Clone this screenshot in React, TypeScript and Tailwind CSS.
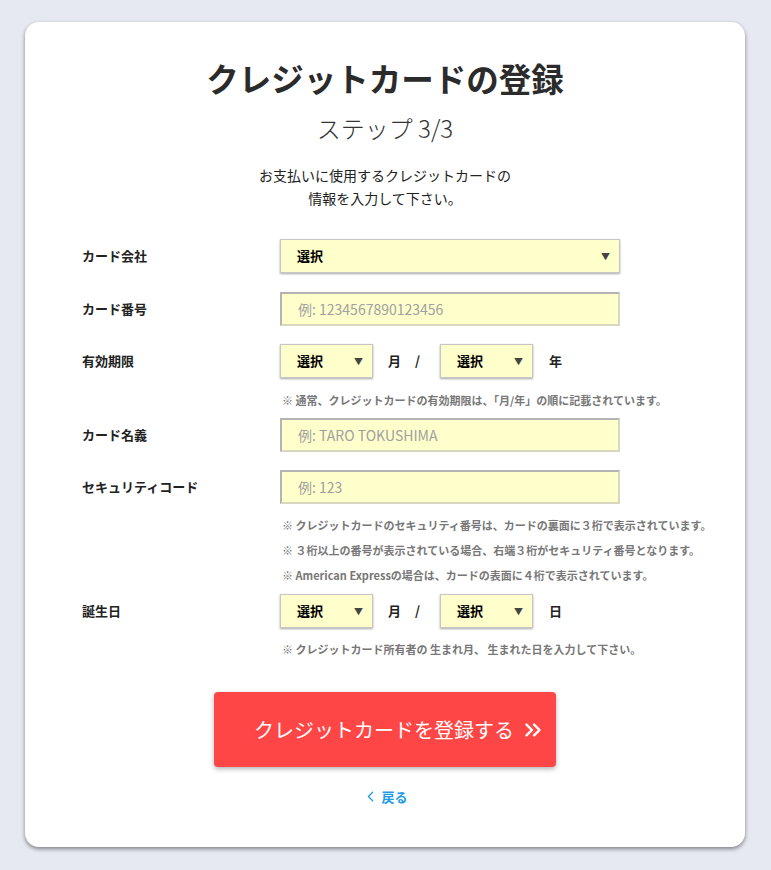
import { ChevronLeft, ChevronsRight } from "lucide-react";
import type { ReactNode } from "react";

const FONT = '"Noto Sans CJK JP", "Noto Sans", sans-serif';

function Label({ children }: { children: ReactNode }) {
  return (
    <div className="w-[198px] shrink-0 text-[13px] font-bold text-[#222]">
      {children}
    </div>
  );
}

function SelectBox({ width }: { width: string }) {
  return (
    <div
      className={`${width} flex h-[34px] items-center justify-between border border-[#c6c6c6] bg-[#ffffcc] pl-[16px] pr-[9px] shadow-[0_1px_2px_rgba(0,0,0,0.35)]`}
    >
      <span className="text-[13px] font-bold text-black">選択</span>
      <span className="text-[9px] leading-none text-[#444]">▼</span>
    </div>
  );
}

function TextBox({ placeholder }: { placeholder: string }) {
  return (
    <div className="flex h-[34px] w-[340px] items-center border-2 border-[#b4b4b4] border-r-[#d8d8c0] border-b-[#d8d8c0] bg-[#ffffcc] pl-[16px]">
      <span className="text-[14px] text-[#a0a0a0]">{placeholder}</span>
    </div>
  );
}

function Note({ children, className = "" }: { children: ReactNode; className?: string }) {
  return (
    <div className={`ml-[200px] h-[16px] text-[11px] font-bold leading-[16px] text-[#777] ${className}`}>
      {children}
    </div>
  );
}

function DateRow({ last }: { last: string }) {
  return (
    <div className="flex items-center">
      <SelectBox width="w-[93px]" />
      <span className="ml-[15px] text-[13px] font-bold text-[#222]">月</span>
      <span className="ml-[14px] text-[13px] font-bold text-[#222]">/</span>
      <div className="ml-[20px]">
        <SelectBox width="w-[93px]" />
      </div>
      <span className="ml-[16px] text-[13px] font-bold text-[#222]">{last}</span>
    </div>
  );
}

export default function App() {
  return (
    <div className="min-h-[870px] bg-[#e6e9f1] pt-[22px]" style={{ fontFamily: FONT }}>
      <div className="mx-[25px] h-[825px] w-[720px] rounded-[14px] bg-white pt-[36px] shadow-[0_2px_4px_rgba(0,0,0,0.45)]">
        <h1 className="text-center text-[32.5px] font-bold leading-[40px] text-[#2b2b2b]">
          クレジットカードの登録
        </h1>
        <p className="mt-[14px] text-center text-[24px] font-light leading-[32px] text-[#333]">
          ステップ 3/3
        </p>
        <p className="mt-[20px] text-center text-[14px] leading-[23px] text-[#222]">
          お支払いに使用するクレジットカードの
          <br />
          情報を入力して下さい。
        </p>

        <div className="ml-[57px] mt-[29px]">
          <div className="flex items-center">
            <Label>カード会社</Label>
            <SelectBox width="w-[340px]" />
          </div>
          <div className="mt-[19px] flex items-center">
            <Label>カード番号</Label>
            <TextBox placeholder="例: 1234567890123456" />
          </div>
          <div className="mt-[18px] flex items-center">
            <Label>有効期限</Label>
            <DateRow last="年" />
          </div>
          <Note className="mt-[14px]">
            ※ 通常、クレジットカードの有効期限は、「月/年」の順に記載されています。
          </Note>
          <div className="mt-[10px] flex items-center">
            <Label>カード名義</Label>
            <TextBox placeholder="例: TARO TOKUSHIMA" />
          </div>
          <div className="mt-[18px] flex items-center">
            <Label>セキュリティコード</Label>
            <TextBox placeholder="例: 123" />
          </div>
          <Note className="mt-[13px]">
            ※ クレジットカードのセキュリティ番号は、カードの裏面に３桁で表示されています。
          </Note>
          <Note className="mt-[9px]">
            ※ ３桁以上の番号が表示されている場合、右端３桁がセキュリティ番号となります。
          </Note>
          <Note className="mt-[9px]">
            ※ American Expressの場合は、カードの表面に４桁で表示されています。
          </Note>
          <div className="mt-[11px] flex items-center">
            <Label>誕生日</Label>
            <DateRow last="日" />
          </div>
          <Note className="mt-[13px]">
            ※ クレジットカード所有者の 生まれ月、 生まれた日を入力して下さい。
          </Note>
        </div>

        <div className="mt-[35px] flex justify-center">
          <button
            type="button"
            className="flex h-[75px] w-[342px] items-center justify-center gap-[6px] rounded-[4px] bg-[#ff4646] pl-[30px] text-[20px] text-white shadow-[0_2px_5px_rgba(0,0,0,0.3)]"
          >
            クレジットカードを登録する
            <ChevronsRight size={26} strokeWidth={2.25} />
          </button>
        </div>
        <div className="mt-[20px] flex items-center justify-center gap-[2px] text-[13px] font-bold text-[#1e9be8]">
          <ChevronLeft size={17} strokeWidth={1.75} />
          戻る
        </div>
      </div>
    </div>
  );
}
